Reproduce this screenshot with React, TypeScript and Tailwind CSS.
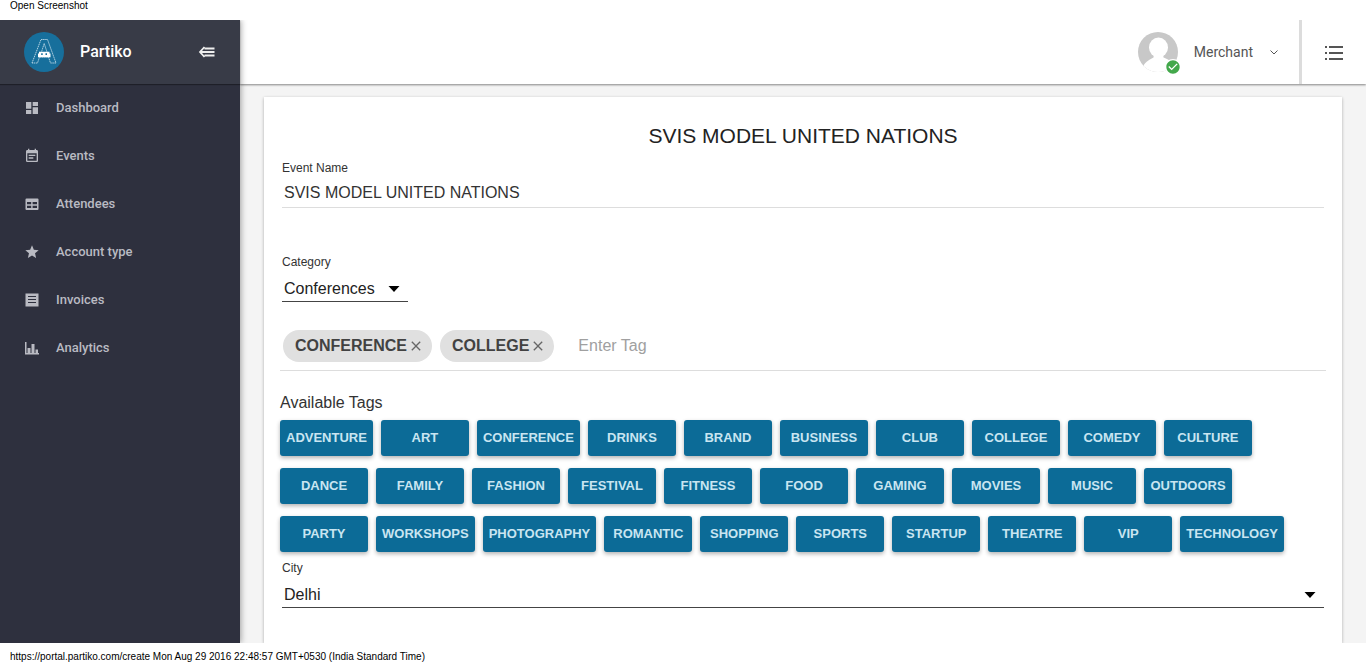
import { useState } from 'react';
import type { ReactNode } from 'react';
import { MdDashboard, MdEventNote, MdStar, MdClose, MdCheckCircle } from 'react-icons/md';

const AVAILABLE_TAGS = [
  'ADVENTURE', 'ART', 'CONFERENCE', 'DRINKS', 'BRAND', 'BUSINESS', 'CLUB', 'COLLEGE', 'COMEDY', 'CULTURE',
  'DANCE', 'FAMILY', 'FASHION', 'FESTIVAL', 'FITNESS', 'FOOD', 'GAMING', 'MOVIES', 'MUSIC', 'OUTDOORS',
  'PARTY', 'WORKSHOPS', 'PHOTOGRAPHY', 'ROMANTIC', 'SHOPPING', 'SPORTS', 'STARTUP', 'THEATRE', 'VIP', 'TECHNOLOGY',
];

function AttendeesIcon() {
  return (
    <svg viewBox="0 0 16 16" className="size-4" fill="currentColor" aria-hidden="true">
      <path fillRule="evenodd" d="M2.500 2.500h11a1 1 0 0 1 1 1v9.500a1 1 0 0 1-1 1h-11a1 1 0 0 1-1-1V3.500a1 1 0 0 1 1-1zM3 6v2.300h4.200V6zM8.600 6v2.300H13V6zM3 9.700V12h4.200V9.700zM8.600 9.700V12H13V9.700z" />
    </svg>
  );
}

function InvoicesIcon() {
  return (
    <svg viewBox="0 0 16 16" className="size-4" fill="currentColor" aria-hidden="true">
      <path fillRule="evenodd" d="M1.500 1.500h13v13h-13zM4 4v1h8V4zM4 7v1h8V7zM4 10v1h8v-1z" />
    </svg>
  );
}

function AnalyticsIcon() {
  return (
    <svg viewBox="0 0 16 16" className="size-4" fill="currentColor" aria-hidden="true">
      <path d="M1 2h1.500v11H15v1.500H1zM3.500 8h3v5.500h-3zM7.500 4h3v9.500h-3zM11.500 9.500h2.500v4h-2.500z" />
    </svg>
  );
}

function CollapseIcon() {
  return (
    <svg viewBox="0 0 18 14" className="h-3.5 w-4.5" fill="none" stroke="currentColor" strokeWidth="1.800" aria-hidden="true">
      <path d="M6.500 2L2 7l4.500 5M2 7h14.500M6.500 3.500h10M6.500 10.500h10" />
    </svg>
  );
}

function Logo() {
  return (
    <svg viewBox="0 0 40 40" className="size-10" aria-hidden="true">
      <circle cx="20" cy="20" r="20" fill="#176f9c" />
      <path d="M8 31L17 7.500h6.500L32 31h-5.500l-2-6h-9l-2 6zM20.200 11.500L17 21.500h6.500z" fill="none" stroke="#d5e8f1" strokeWidth="0.800" strokeDasharray="1.500 0.600" />
      <path d="M15 19.800h10.500v1.700h1v3.800H14v-3.800h1z" fill="#fff" />
      <path d="M17.200 21.300h1.500v1.700h-1.500zM21.500 21.300H23V23h-1.500z" fill="#176f9c" />
    </svg>
  );
}

function Avatar() {
  return (
    <span className="relative block size-10">
      <span className="block size-10 overflow-hidden rounded-full">
        <svg viewBox="0 0 40 40" className="size-10" aria-hidden="true">
          <path d="M0 0h40v40H0z" fill="#c8c8c8" />
          <ellipse cx="20.500" cy="15.500" rx="9.500" ry="10" fill="#fff" />
          <path d="M5 34.500C8 29 12 27.500 15.500 25.500L16 21h9l.5 4.500c5 2 8 3.500 11 7.500V40H5z" fill="#fff" />
        </svg>
      </span>
      <MdCheckCircle className="absolute -right-[3px] -bottom-[3px] size-4 rounded-full bg-white text-[#43a84b]" aria-hidden="true" />
    </span>
  );
}

const NAV: { label: string; icon: ReactNode }[] = [
  { label: 'Dashboard', icon: <MdDashboard className="size-4" /> },
  { label: 'Events', icon: <MdEventNote className="size-4" /> },
  { label: 'Attendees', icon: <AttendeesIcon /> },
  { label: 'Account type', icon: <MdStar className="size-4" /> },
  { label: 'Invoices', icon: <InvoicesIcon /> },
  { label: 'Analytics', icon: <AnalyticsIcon /> },
];

function Sidebar() {
  return (
    <aside className="z-20 flex w-60 shrink-0 flex-col bg-[#2e303e] shadow-[1px_0_6px_rgba(0,0,0,0.35)]">
      <div className="flex h-16 items-center bg-[#383b47] px-6 shadow-[0_1px_1px_rgba(0,0,0,0.35)]">
        <Logo />
        <span className="ml-4 font-['Roboto',sans-serif] text-base font-medium text-white">Partiko</span>
        <button type="button" aria-label="Collapse menu" className="ml-auto text-[#eee]">
          <CollapseIcon />
        </button>
      </div>
      <nav>
        {NAV.map((item) => (
          <a key={item.label} href="#" className="flex h-12 items-center gap-4 px-6 text-[#b9bac2]">
            {item.icon}
            <span className="font-['Roboto',sans-serif] text-[13px] font-medium">{item.label}</span>
          </a>
        ))}
      </nav>
    </aside>
  );
}

function TopBar() {
  return (
    <header className="z-10 flex h-16 shrink-0 items-stretch justify-end bg-white shadow-[0_1px_2px_rgba(0,0,0,0.45)]">
      <button type="button" className="flex items-center pr-5 text-[#555]">
        <Avatar />
        <span className="ml-4 font-['Roboto',sans-serif] text-sm">Merchant</span>
        <svg viewBox="0 0 10 10" className="ml-4 size-2.5" fill="none" stroke="currentColor" aria-hidden="true">
          <path d="M1.500 3.500L5 7l3.500-3.500" />
        </svg>
      </button>
      <button type="button" aria-label="Open list" className="flex w-[67px] items-center justify-center border-l-3 border-[#dcdcdc] text-[#555]">
        <svg viewBox="0 0 18 16" className="h-4 w-4.5" fill="currentColor" aria-hidden="true">
          <path d="M0 2h2v2H0zM4 2h14v2H4zM0 8h2v2H0zM4 8h14v2H4zM0 14h2v2H0zM4 14h14v2H4z" />
        </svg>
      </button>
    </header>
  );
}

function SelectField({ id, label, options, className }: { id: string; label: string; options: string[]; className: string }) {
  return (
    <div className={className}>
      <label htmlFor={id} className="block text-xs leading-4 text-[#333]">{label}</label>
      <div className="relative mt-1">
        <select id={id} className="block h-7 w-full appearance-none border-b border-[#444] bg-transparent px-0.5 pt-0.5 text-base text-[#222] outline-none">
          {options.map((option) => <option key={option}>{option}</option>)}
        </select>
        <svg viewBox="0 0 12 6" className="pointer-events-none absolute top-3 right-2 h-1.5 w-3" fill="#000" aria-hidden="true">
          <path d="M0.500 0h11L6 6z" />
        </svg>
      </div>
    </div>
  );
}

function EventForm() {
  const [name, setName] = useState('SVIS MODEL UNITED NATIONS');
  const [tags, setTags] = useState(['CONFERENCE', 'COLLEGE']);

  return (
    <form className="grow bg-white px-4 pt-[25px] shadow-[0_1px_3px_rgba(0,0,0,0.3)]">
      <h1 className="text-center text-[21px] leading-7 text-[#222]">{name}</h1>
      <div className="mx-0.5 mt-2.5">
        <label htmlFor="event-name" className="block text-xs leading-4 text-[#333]">Event Name</label>
        <input
          id="event-name"
          value={name}
          onChange={(e) => setName(e.target.value)}
          className="block h-8 w-full border-b border-[#ddd] px-0.5 pt-0.5 text-base text-[#333] outline-none"
        />
      </div>
      <SelectField id="category" label="Category" options={['Conferences', 'Workshops']} className="mx-0.5 mt-[46px] w-[126px]" />
      <div className="mt-7 flex flex-wrap items-center gap-2 border-b border-[#ddd] pb-2 pl-[3px]">
        {tags.map((tag) => (
          <span key={tag} className="flex h-8 items-center gap-px rounded-full bg-[#e0e0e0] pr-2 pl-3 font-bold text-[#424242]">
            {tag}
            <button type="button" aria-label={`Remove ${tag}`} className="text-[#666]" onClick={() => setTags(tags.filter((t) => t !== tag))}>
              <MdClose className="size-4" />
            </button>
          </span>
        ))}
        <input aria-label="Enter Tag" placeholder="Enter Tag" className="ml-4 h-8 grow text-base outline-none placeholder:text-[#a0a0a0]" />
      </div>
      <h2 className="mt-5 text-base leading-6 text-[#333]">Available Tags</h2>
      <div className="mt-[5px] flex flex-wrap gap-x-2 gap-y-3">
        {AVAILABLE_TAGS.map((tag) => (
          <button
            key={tag}
            type="button"
            onClick={() => !tags.includes(tag) && setTags([...tags, tag])}
            className="h-9 min-w-[88px] rounded-[3px] bg-[#0c6b97] px-1.5 text-[13px] font-bold text-[#c9e5f1] shadow-[0_2px_4px_rgba(0,0,0,0.3)]"
          >
            {tag}
          </button>
        ))}
      </div>
      <SelectField id="city" label="City" options={['Delhi', 'Mumbai']} className="mx-0.5 mt-2" />
    </form>
  );
}

export default function App() {
  return (
    <div className="flex h-screen flex-col overflow-hidden bg-white font-['Liberation_Sans',Arial,sans-serif]">
      <div className="h-5 shrink-0 px-2.5">
        <a href="#" className="block text-[10px] leading-3 text-black">Open Screenshot</a>
      </div>
      <div className="flex min-h-0 grow overflow-hidden">
        <Sidebar />
        <div className="flex min-w-0 grow flex-col bg-[#f4f4f4]">
          <TopBar />
          <main className="flex min-h-0 grow flex-col overflow-hidden px-6 pt-[13px]">
            <EventForm />
          </main>
        </div>
      </div>
      <footer className="flex h-5 shrink-0 items-end px-2.5 text-[10px] leading-3 text-black">
        https://portal.partiko.com/create Mon Aug 29 2016 22:48:57 GMT+0530 (India Standard Time)
      </footer>
    </div>
  );
}
